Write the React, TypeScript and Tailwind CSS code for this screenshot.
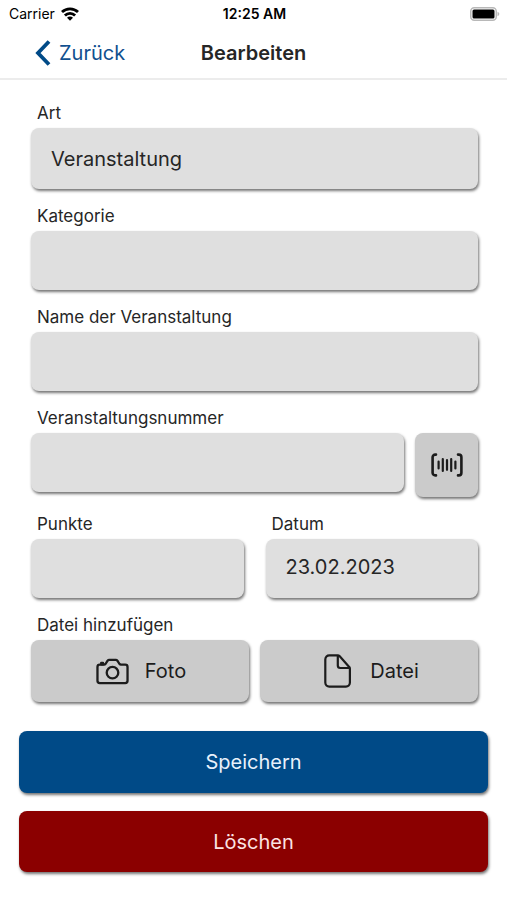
import React from 'react';
import { IoCameraOutline } from 'react-icons/io5';

const shadow = 'shadow-[1px_2px_3px_rgba(0,0,0,0.55)]';
const fieldClass = `block w-full h-[59px] appearance-none rounded-lg bg-[#dfdfdf] px-5 pb-1 text-xl text-[#262626] outline-none ${shadow}`;
const grayButtonClass = `flex items-center justify-center rounded-lg bg-[#cbcbcb] text-[#1c1c1c] ${shadow}`;
const labelClass = 'mb-[5px] block pl-1.5 text-[17px] leading-5';

interface FieldProps {
  id: string;
  label: string;
  className?: string;
  children: React.ReactNode;
}

const Field: React.FC<FieldProps> = ({ id, label, className = '', children }) => (
  <div className={className}>
    <label htmlFor={id} className={labelClass}>
      {label}
    </label>
    {children}
  </div>
);

const WifiIcon: React.FC = () => (
  <svg width="18" height="14" viewBox="0 0 18 14" fill="none" stroke="#000" strokeWidth="2.8" aria-hidden="true">
    <path d="M1 5.1a11.4 11.4 0 0 1 16 0" />
    <path d="M3.9 8.5a7.2 7.2 0 0 1 10.2 0" />
    <path d="M9 13.8L6 10.8a4.2 4.2 0 0 1 6 0z" fill="#000" stroke="none" />
  </svg>
);

const BatteryIcon: React.FC = () => (
  <svg width="30" height="14" viewBox="0 0 30 14" aria-hidden="true">
    <rect x="0.75" y="0.75" width="25.5" height="12.5" rx="3.5" fill="#fff" stroke="#b8b8b8" strokeWidth="1.5" />
    <rect x="2.5" y="2.5" width="22" height="9" rx="1.5" fill="#000" />
    <path d="M27.5 4.8c2.4.8 2.4 3.6 0 4.4z" fill="#b8b8b8" />
  </svg>
);

const BarcodeIcon: React.FC = () => (
  <svg width="32" height="24" viewBox="0 0 32 24" fill="none" stroke="currentColor" strokeLinecap="round" aria-hidden="true">
    <path d="M5 1.6H4.2a2.6 2.6 0 0 0-2.6 2.6v15.6a2.6 2.6 0 0 0 2.6 2.6H5" strokeWidth="2.6" />
    <path d="M25 1.6h.8a2.6 2.6 0 0 1 2.6 2.6v15.6a2.6 2.6 0 0 1-2.6 2.6H25" strokeWidth="2.6" transform="translate(2 0)" />
    <path d="M7.6 8.6v6.8M11.8 6v12M16 7.2v9.6M20.2 6v12M24.4 8.6v6.8" strokeWidth="2.2" />
  </svg>
);

const FileIcon: React.FC = () => (
  <svg width="37" height="34" viewBox="0 0 37 34" fill="none" stroke="currentColor" strokeWidth="2.2" strokeLinejoin="round" aria-hidden="true">
    <path d="M30.9 14.6v14a4 4 0 0 1-4 4H10.3a4 4 0 0 1-4-4V5.4a4 4 0 0 1 4-4h8.5a2.4 2.4 0 0 1 1.7.7l9.7 10.8a2.4 2.4 0 0 1 .7 1.7z" />
    <path d="M18.8 1.8v9.8a2.4 2.4 0 0 0 2.4 2.4h9.3" />
  </svg>
);

const StatusBar: React.FC = () => (
  <div className="grid h-7 grid-cols-3 items-center pr-[7px] pl-[9px] text-sm text-black">
    <div className="flex items-center gap-1.5">
      <span>Carrier</span>
      <WifiIcon />
    </div>
    <div className="text-center font-semibold">12:25 AM</div>
    <div className="flex justify-end">
      <BatteryIcon />
    </div>
  </div>
);

const Header: React.FC = () => (
  <header className="grid h-[52px] grid-cols-[1fr_auto_1fr] items-center border-b-2 border-[#ececec] px-[35px]">
    <a href="#" className="flex items-center gap-2 text-xl text-[#10508f]">
      <svg width="16" height="26" viewBox="0 0 16 26" fill="none" aria-hidden="true">
        <path d="M14 1.5L3 13l11 11.5" stroke="#004a87" strokeWidth="3.8" />
      </svg>
      Zurück
    </a>
    <h1 className="text-xl font-semibold">Bearbeiten</h1>
  </header>
);

const App: React.FC = () => {
  return (
    <div className="min-h-screen bg-white font-['Inter','Liberation_Sans',sans-serif] text-[#262626]">
      <StatusBar />
      <Header />

      <form className="pt-[23px]">
        <div className="flex flex-col gap-[17px] pr-[29px] pl-[31px]">
          <Field id="art" label="Art">
            <select
              id="art"
              className={`block h-[61px] w-full appearance-none rounded-lg bg-[#dfdfdf] px-5 text-xl outline-none ${shadow}`}
            >
              <option>Veranstaltung</option>
            </select>
          </Field>

          <Field id="kategorie" label="Kategorie">
            <select id="kategorie" className={fieldClass}>
              <option></option>
            </select>
          </Field>

          <Field id="name" label="Name der Veranstaltung">
            <input id="name" type="text" className={fieldClass} />
          </Field>

          <div className="flex gap-[11px]">
            <Field id="nummer" label="Veranstaltungsnummer" className="flex-1">
              <input id="nummer" type="text" className={fieldClass} />
            </Field>
            <button type="button" aria-label="Barcode scannen" className={`mt-[25px] h-16 w-[63px] ${grayButtonClass}`}>
              <BarcodeIcon />
            </button>
          </div>

          <div className="grid grid-cols-2 gap-[22px]">
            <Field id="punkte" label="Punkte">
              <input id="punkte" type="text" className={fieldClass} />
            </Field>
            <Field id="datum" label="Datum">
              <input id="datum" type="text" defaultValue="23.02.2023" className={fieldClass} />
            </Field>
          </div>

          <div>
            <div className={labelClass}>Datei hinzufügen</div>
            <div className="grid grid-cols-2 gap-[11px]">
              <button type="button" className={`h-[62px] gap-3.5 text-xl ${grayButtonClass}`}>
                <IoCameraOutline size={37} />
                Foto
              </button>
              <button type="button" className={`h-[62px] gap-3.5 text-xl ${grayButtonClass}`}>
                <FileIcon />
                Datei
              </button>
            </div>
          </div>
        </div>

        <div className="mt-[29px] flex flex-col gap-[18px] px-[19px]">
          <button type="submit" className={`h-[62px] rounded-lg bg-[#004a87] text-xl text-[#e8f1fb] ${shadow}`}>
            Speichern
          </button>
          <button type="button" className={`h-[61px] rounded-lg bg-[#8b0000] text-xl text-[#fbe3e3] ${shadow}`}>
            Löschen
          </button>
        </div>
      </form>
    </div>
  );
};

export default App;
